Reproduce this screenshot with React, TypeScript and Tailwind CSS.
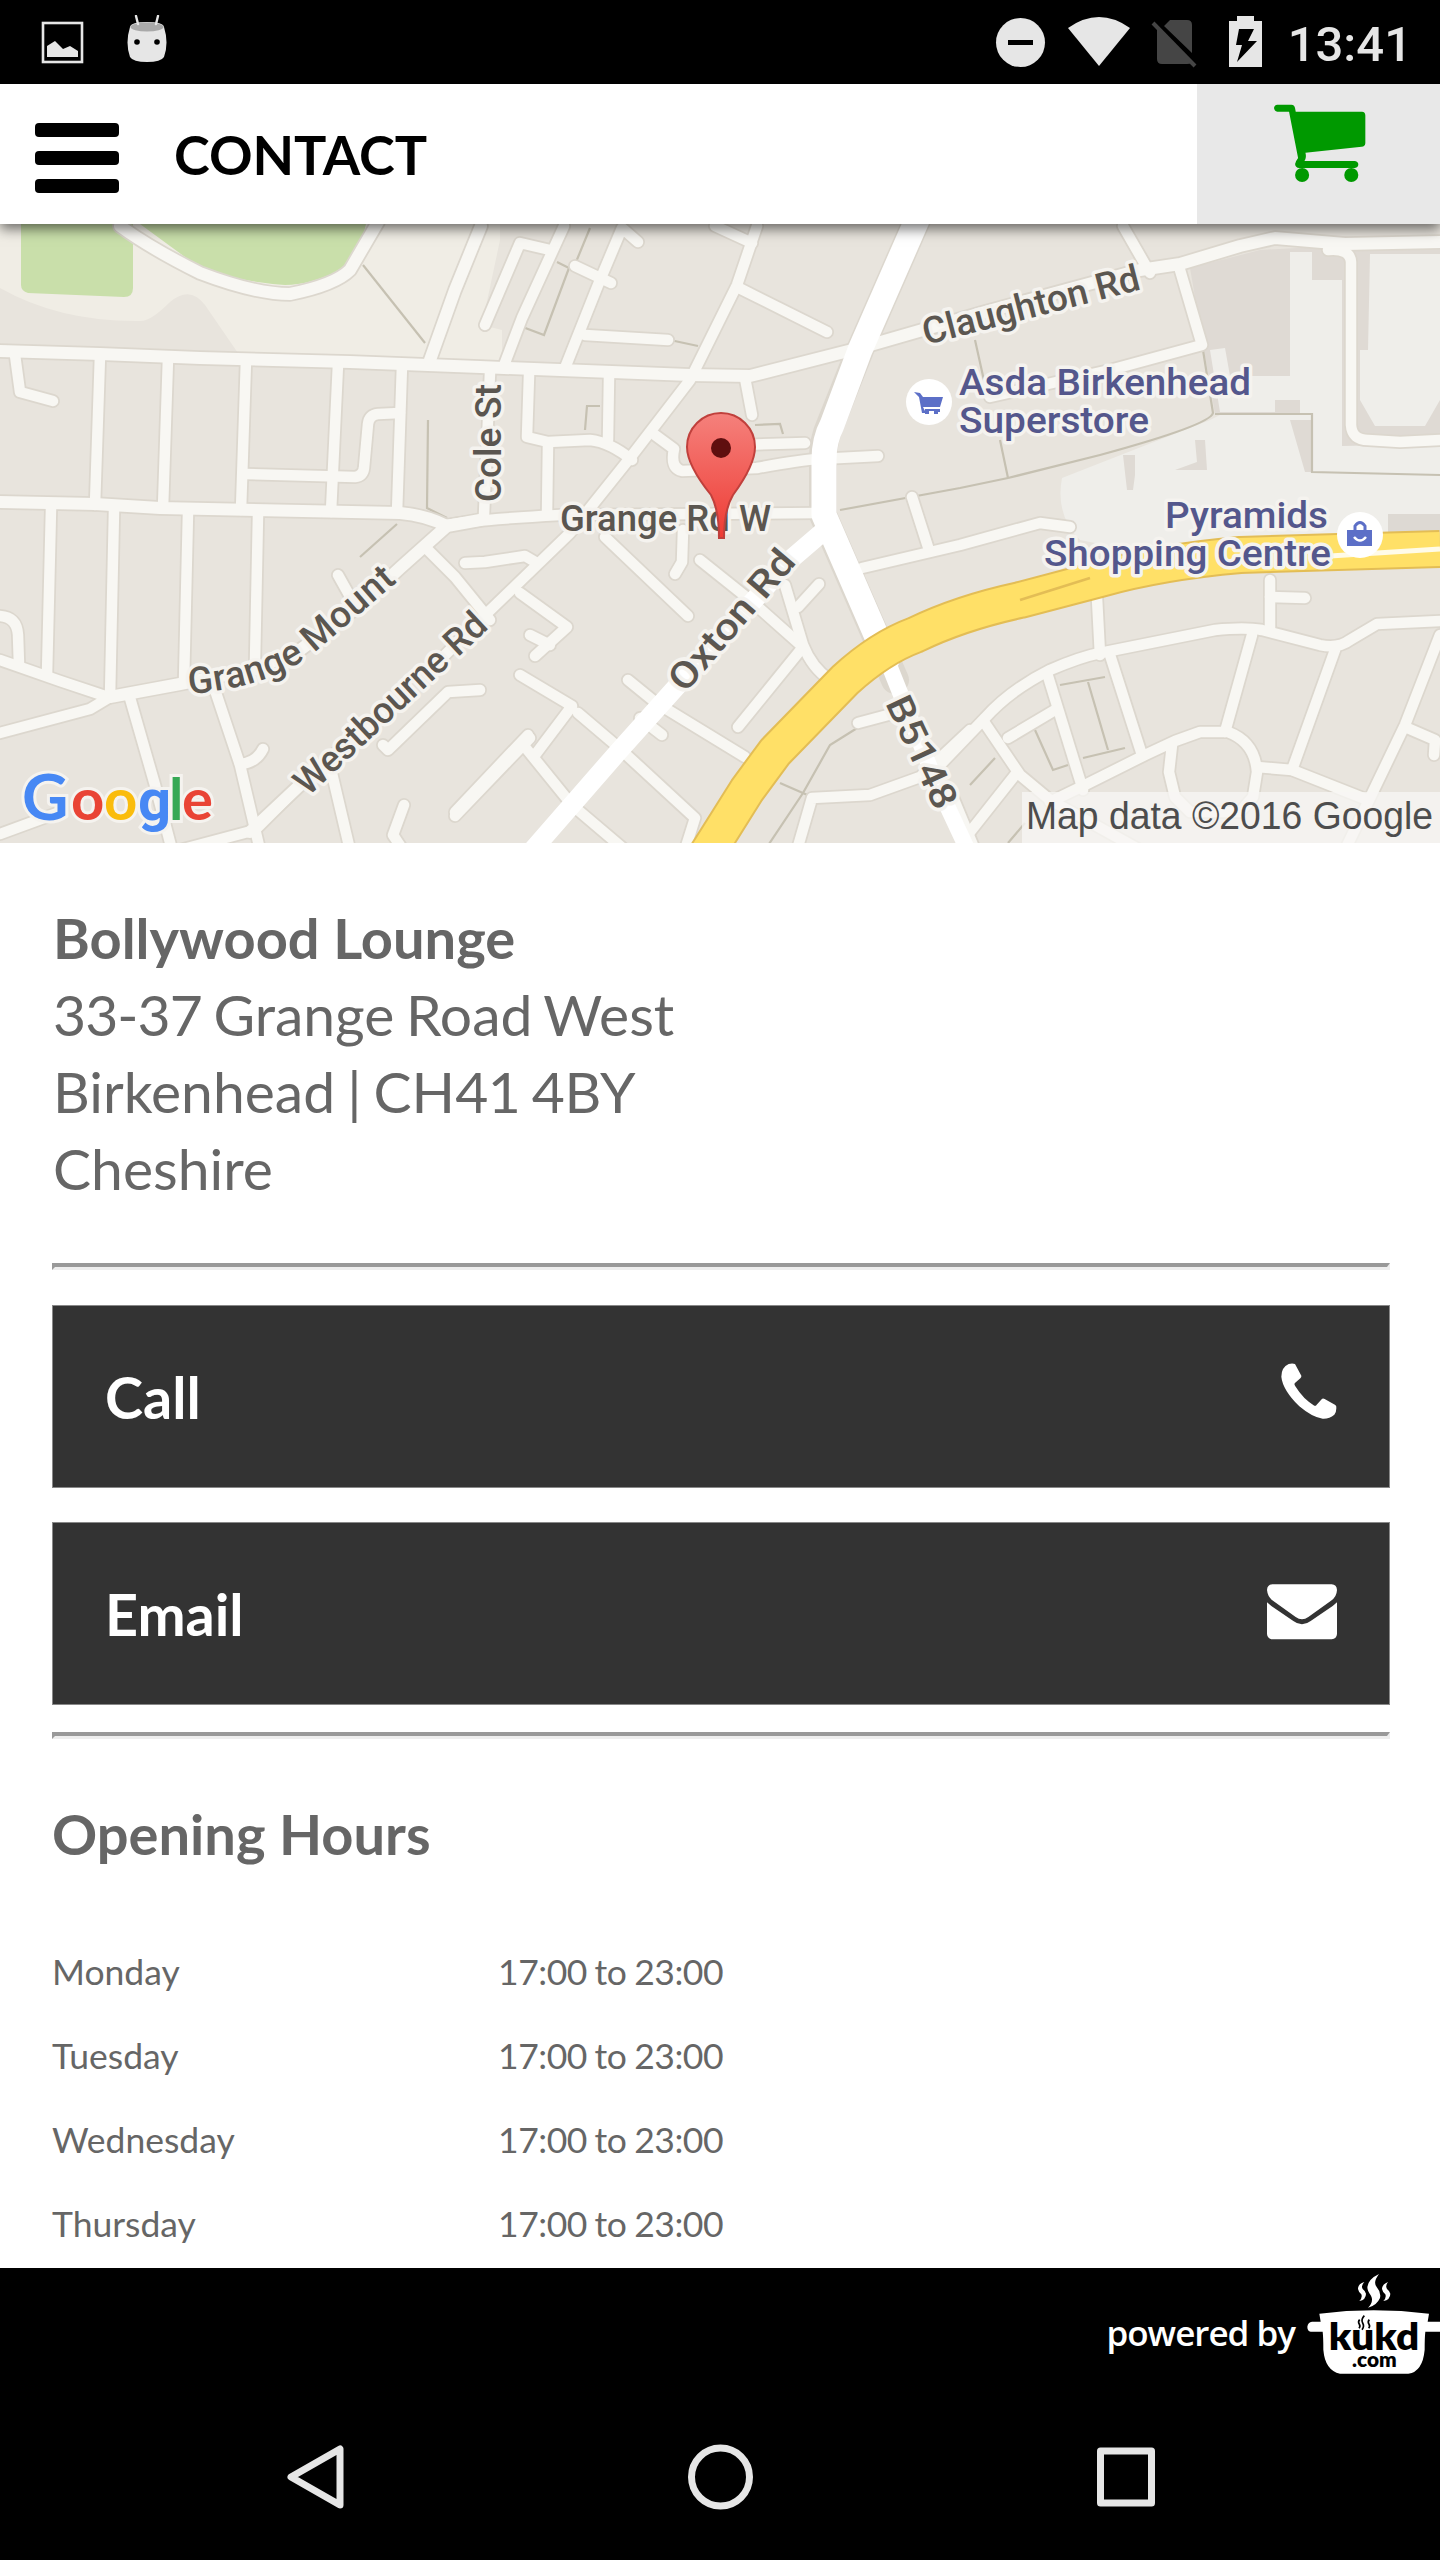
import type { ReactNode } from "react";

const COLORS = {
  land: "#e8e4dd",
  park: "#f0ede5",
  grass: "#c9dfaa",
  road: "#f8f7f3",
  casing: "#dcd7ce",
  mainRoad: "#ffffff",
  aRoad: "#ffe067",
  aRoadEdge: "#e3bd55",
  path: "#c6c1b2",
  label: "#5b5650",
  poi: "#54578c",
  status: "#e6e6e6",
  cart: "#009900",
};

const hours = [
  { day: "Monday", time: "17:00 to 23:00" },
  { day: "Tuesday", time: "17:00 to 23:00" },
  { day: "Wednesday", time: "17:00 to 23:00" },
  { day: "Thursday", time: "17:00 to 23:00" },
];

// small residential streets
const streets = [
  "M15 355L20 392L53 401",
  "M100 355L95 505",
  "M168 358L163 508",
  "M246 360L241 510",
  "M338 364L331 512",
  "M402 365L397 513",
  "M246 474L355 477Q363 476 364 468L368 424Q369 415 378 414L400 413",
  "M51 508L47 675",
  "M114 510L110 697",
  "M188 512L184 682",
  "M258 514L255 662",
  "M425 547L455 577L490 620",
  "M465 563L485 562L525 556L537 563",
  "M338 575L352 600",
  "M0 616Q17 617 18 635L19 665",
  "M0 660L60 681L105 696",
  "M0 733L90 709L110 697",
  "M130 698L155 785L172 850",
  "M215 690L240 765L260 850",
  "M240 764Q256 763 263 749",
  "M0 834L60 812",
  "M180 850L255 830L300 785",
  "M330 765L350 850",
  "M383 745L388 750L448 692L480 690",
  "M403 850L393 835L404 805",
  "M455 816L530 738",
  "M485 325L520 243L550 250",
  "M503 368L522 318L564 226",
  "M565 368L598 285L622 228L638 242",
  "M575 266L611 283",
  "M585 335L668 340",
  "M757 226L737 285L690 380L630 458L570 533L480 620L440 660",
  "M715 226L752 243",
  "M737 287L827 332",
  "M529 375L527 437L548 442L590 440Q610 442 632 460",
  "M548 443L547 515",
  "M609 376L608 440",
  "M745 378L752 415",
  "M655 435L674 449Q670 468 682 471L757 468Q800 460 820 459L878 456",
  "M740 445L805 443",
  "M490 372L484 515",
  "M447 525Q470 520 560 515L818 513",
  "M912 497L928 547",
  "M605 537L688 616",
  "M683 530L682 562L675 574",
  "M700 560L750 600L803 647L738 727",
  "M785 585L803 645Q812 668 830 680",
  "M798 607L819 584",
  "M520 593L567 627L535 656",
  "M530 635L550 645",
  "M520 675L572 706L535 755",
  "M578 713L618 747L695 818L685 850",
  "M455 812L528 735",
  "M525 747L572 805L625 850",
  "M628 680L655 702L745 757",
  "M640 718L662 735",
  "M862 568L960 545L1040 523L1070 527",
  "M858 723L888 715",
  "M797 850L812 798L870 795L920 777L970 730",
  "M940 765L985 718Q1010 690 1050 670Q1080 657 1100 653L1215 630Q1245 627 1262 630L1320 645Q1338 649 1350 640L1377 624L1440 621",
  "M1097 598L1100 655",
  "M1270 580L1270 628",
  "M1270 597L1305 598",
  "M1110 655L1142 755",
  "M1252 635L1225 732",
  "M1335 650L1292 770",
  "M1440 635L1405 725L1345 850",
  "M1405 727L1435 740L1434 755",
  "M1047 673L1083 790",
  "M1050 802L1085 785L1145 755L1175 741L1200 732L1228 732Q1255 742 1257 772L1253 797L1240 812L1190 812L1175 797L1169 772L1172 745",
  "M1257 767L1292 770L1368 800",
  "M984 722L1020 775L1050 800L1140 850",
  "M1055 710L1008 738",
  "M1015 775L970 832",
  "M950 790L975 850",
  "M1123 226L1150 273",
  "M1180 270L1202 345L1110 370L990 397",
  "M1328 250Q1350 248 1351 262L1351 425Q1352 440 1368 440L1400 442L1440 440",
];

const connectors = [
  "M0 351L100 354L200 358L350 362L480 367L690 375L750 376L860 348L985 312L1140 270L1180 264L1240 246L1275 238L1345 244L1440 242",
  "M0 502L95 504L160 508L400 513Q425 515 447 526",
  "M480 520L447 526L400 568L360 605L300 650L255 669L180 684L110 697",
  "M120 226Q150 248 200 273Q255 294 290 294Q335 285 350 270L378 222",
  "M481 226L455 290L430 360",
  "M250 832L300 785L380 715",
];

// service roads and footpaths
const paths = [
  "M363 265L425 343",
  "M428 420L427 508L447 518",
  "M397 524L360 557",
  "M585 430L587 406L600 406",
  "M557 262L569 268L544 335L520 326",
  "M670 340L698 346",
  "M590 228L576 262",
  "M755 425L780 424L783 434",
  "M840 510L960 488L1008 478L1100 455Q1210 425 1213 413L1203 350",
  "M975 340L985 385M1000 440L1008 478",
  "M1215 414L1312 414L1312 472L1440 475",
  "M765 850L803 793L830 745L862 725",
  "M780 783L812 797",
  "M1060 685L1105 677M1088 682L1108 750M1083 758L1125 748",
  "M1035 730L1053 770L1068 765M995 758L970 785M1008 843L1025 823",
  "M1020 600L1080 580L1105 573",
];

function StatusBar() {
  return (
    <div className="flex h-[84px] items-center justify-between bg-black">
      <div className="flex items-center pl-[41px]">
        <svg className="h-[43px] w-[43px]" viewBox="0 0 43 43" fill={COLORS.status}>
          <rect x="2" y="2" width="39" height="39" fill="none" stroke={COLORS.status} strokeWidth="2.6" />
          <path d="M6 25L14 20L22 28L29 25L37 30V36H6Z" />
        </svg>
        <svg className="mb-[6px] ml-[43px] h-[48px] w-[40px]" viewBox="0 0 40 48">
          <path d="M3 12Q4 7 20 7Q36 7 37 12Q42 28 37 42Q34 47 20 47Q6 47 3 42Q-2 28 3 12Z" fill={COLORS.status} />
          <ellipse cx="20" cy="12" rx="16.5" ry="4.5" fill="#a9a9a9" />
          <path d="M9 1L11 9M31 1L29 9" stroke={COLORS.status} strokeWidth="2.4" strokeLinecap="round" />
          <circle cx="10" cy="27" r="2.8" />
          <circle cx="30" cy="27" r="2.8" />
        </svg>
      </div>
      <div className="flex items-center pr-[28px]">
        <svg className="h-[52px] w-[272px]" viewBox="990 16 272 52" fill={COLORS.status}>
          <circle cx="1020.500" cy="42.500" r="24.500" />
          <rect x="1008" y="40" width="25" height="5" fill="#000" />
          <path d="M1068 28Q1099 6 1130 28L1099 66Z" />
          <path d="M1170 20H1187Q1192 20 1192 25V53L1164 26ZM1157 29L1191 63Q1190 64 1187 64H1162Q1157 64 1157 59Z" fill="#454545" />
          <path d="M1153 23L1195 66" stroke="#454545" strokeWidth="4" />
          <path d="M1229 21H1237V16H1254V21H1262V67H1229Z" />
          <path d="M1239 29H1254L1248 41H1257L1237 62L1242 45H1236Z" fill="#000" />
        </svg>
        <span className="ml-[26px] mt-[4px] font-[Roboto] text-[49px] font-medium leading-none text-[#e6e6e6]">13:41</span>
      </div>
    </div>
  );
}

function Header() {
  return (
    <header className="relative z-10 flex h-[140px] items-stretch justify-between bg-white shadow-[0_5px_12px_rgba(0,0,0,0.55)]">
      <div className="flex items-center pl-[35px]">
        <div className="mt-[8px] flex w-[84px] flex-col gap-[14px]">
          <div className="h-[14px] rounded-[4px] bg-black" />
          <div className="h-[14px] rounded-[4px] bg-black" />
          <div className="h-[14px] rounded-[4px] bg-black" />
        </div>
        <h1 className="ml-[55px] mt-[2px] text-[54px] font-bold leading-none text-black">CONTACT</h1>
      </div>
      <div className="flex w-[243px] justify-center bg-[#e8e8e8] pt-[20px]">
        <svg className="ml-[3px] h-[79px] w-[92px]" viewBox="942 314 275 234" fill={COLORS.cart}>
          <path d="M952 315H994Q1004 316 1005 326L1007 336H1205Q1215 337 1215 347V430Q1214 440 1204 441L1036 459Q1040 474 1033 483H1184Q1194 485 1194 493Q1194 503 1184 504H1017Q1006 503 1005 492Q1007 483 1014 474L987 336H952Q943 334 942 325Q943 316 952 315Z" />
          <circle cx="1026" cy="525" r="21" />
          <circle cx="1173" cy="525" r="21" />
        </svg>
      </div>
    </header>
  );
}

function Label({ children, size = 37, fill = COLORS.label, ...rest }: any) {
  return (
    <text
      fontFamily="Roboto, sans-serif"
      fontSize={size}
      fontWeight="500"
      fill={fill}
      stroke="#f5f3ef"
      strokeWidth="7"
      strokeLinejoin="round"
      paintOrder="stroke"
      lengthAdjust="spacingAndGlyphs"
      {...rest}
    >
      {children}
    </text>
  );
}

function Map() {
  return (
    <svg className="block h-[619px] w-full" viewBox="0 224 1440 619">
      <rect x="0" y="224" width="1440" height="619" fill={COLORS.land} />
      {/* park */}
      <path d="M0 224H500L500 240L482 325L502 330V366L240 356L205 305Q190 285 170 302Q150 322 140 321Q60 322 0 288Z" fill={COLORS.park} />
      <path d="M21 224H133V288Q133 297 124 297L28 293Q21 291 21 285Z" fill={COLORS.grass} />
      <path d="M140 224H366Q358 262 340 270Q310 285 285 285Q240 282 200 268Z" fill={COLORS.grass} />

      {/* shopping area */}
      <path d="M1190 268L1260 250L1440 240V470H1312V414H1215Z" fill="#dfdad4" />
      <path d="M1290 252H1312V280H1342V446L1440 444V560H1180L1080 540Q1055 515 1062 478L1210 420L1222 414H1300V400H1275V376H1290ZM1370 254H1440V400L1425 426H1375L1360 400V350H1368Z" fill="#efeeea" />
      <path d="M1290 420H1312V472H1305ZM1123 455H1135V475L1133 490H1127ZM1195 440H1205L1207 470H1175L1197 462Z" fill="#dfdad4" />
      <path d="M1210 350L1225 348L1230 376H1275V412H1220Z" fill="#efeeea" />
      <path d="M1388 514H1440V532L1388 540Z" fill="#ddd9d3" />

      {paths.map((d, i) => (
        <path key={i} d={d} fill="none" stroke={COLORS.path} strokeWidth="2.2" />
      ))}

      <g fill="none" strokeLinecap="round" strokeLinejoin="round">
        {streets.map((d, i) => (
          <path key={i} d={d} stroke={COLORS.casing} strokeWidth="14" />
        ))}
        {connectors.map((d, i) => (
          <path key={i} d={d} stroke={COLORS.casing} strokeWidth="15.500" />
        ))}
        <path d="M917 220L860 350L830 425Q823 440 823 460V515L895 680" stroke={COLORS.casing} strokeWidth="28" />
        {streets.map((d, i) => (
          <path key={i} d={d} stroke={COLORS.road} strokeWidth="10.500" />
        ))}
        {connectors.map((d, i) => (
          <path key={i} d={d} stroke={COLORS.road} strokeWidth="12" />
        ))}
        <path d="M825 530L790 560L618 752L530 853" stroke={COLORS.mainRoad} strokeWidth="19" />
        <path d="M917 220L860 350L832 425Q824 440 824 460V515L887 660" stroke={COLORS.mainRoad} strokeWidth="25" />
        <path d="M887 660L935 780L970 855" stroke={COLORS.mainRoad} strokeWidth="16" />
      </g>

      {/* A road */}
      <g fill="none" strokeLinejoin="round">
        <path d="M703 860L747 790L775 752L845 680Q880 648 915 635Q960 613 1020 600L1100 579Q1160 562 1240 555L1440 549" stroke={COLORS.aRoadEdge} strokeWidth="38" />
        <path d="M703 860L747 790L775 752L845 680Q880 648 915 635Q960 613 1020 600L1100 579Q1160 562 1240 555L1440 549" stroke={COLORS.aRoad} strokeWidth="34" />
        <path d="M1330 556L1440 549" stroke="#fffbe8" strokeWidth="5" />
        <path d="M1020 600L1090 578" stroke={COLORS.aRoadEdge} strokeWidth="2.500" />
      </g>

      <defs>
        <path id="grange-mount" d="M189 694Q275 687 320 648L412 569" />
        <linearGradient id="pin" x1="0" y1="0" x2="0" y2="1">
          <stop offset="0" stopColor="#f5817c" />
          <stop offset="1" stopColor="#ee3b34" />
        </linearGradient>
      </defs>

      <Label x="560" y="531" textLength="211">Grange Rd W</Label>
      <Label transform="translate(501 502) rotate(-90)" textLength="118">Cole St</Label>
      <Label transform="translate(926 345) rotate(-14.500)" textLength="223">Claughton Rd</Label>
      <Label><textPath href="#grange-mount" textLength="243">Grange Mount</textPath></Label>
      <Label transform="translate(308 797) rotate(-43)" textLength="248">Westbourne Rd</Label>
      <Label transform="translate(685 694) rotate(-49.500)" textLength="173">Oxton Rd</Label>
      <Label transform="translate(885 703) rotate(65)" textLength="120">B5148</Label>
      <Label x="959" y="395" fill={COLORS.poi} textLength="292">Asda Birkenhead</Label>
      <Label x="959" y="433" fill={COLORS.poi} textLength="190">Superstore</Label>
      <Label x="1165" y="528" fill={COLORS.poi} textLength="163">Pyramids</Label>
      <Label x="1044" y="566" fill={COLORS.poi} textLength="287">Shopping Centre</Label>

      <circle cx="929" cy="402" r="23" fill="#fff" />
      <path d="M914 392L920 393L923 397H943L940 407H923L926 413H922L919 397ZM925 409H940V412H938V414H934V411H929V414H925Z" fill="#5c6fc7" />
      <circle cx="1360" cy="535" r="23" fill="#fff" />
      <path d="M1355 530V526Q1360 519 1365 526V530" fill="none" stroke="#5c6fc7" strokeWidth="3" />
      <path d="M1347 530H1372V546H1347Z" fill="#5c6fc7" />
      <path d="M1354 537Q1360 544 1366 537" fill="none" stroke="#fff" strokeWidth="2.500" />

      {/* marker */}
      <path
        d="M719 538Q719 510 711 495Q687 465 687 447A34 34 0 0 1 755 447Q755 465 733 495Q724 510 724 538Z"
        fill="url(#pin)"
        stroke="#c0403c"
        strokeWidth="2"
      />
      <circle cx="721" cy="448" r="10" fill="#5f0f0f" />

      <text
        y="820"
        fontFamily="Lato, sans-serif"
        fontSize="58"
        fontWeight="700"
        stroke="#f5f3ef"
        strokeWidth="6"
        paintOrder="stroke"
      >
        <tspan x="22" fontSize="64" fill="#4788f4">G</tspan>
        <tspan x="71" fill="#e94435">o</tspan>
        <tspan x="104" fill="#fabc0c">o</tspan>
        <tspan x="138" fontFamily="Roboto, sans-serif" fill="#4788f4">g</tspan>
        <tspan x="169" fill="#36a854">l</tspan>
        <tspan x="182" fill="#e94435">e</tspan>
      </text>

      <rect x="1022" y="792" width="418" height="51" fill="#f7f6f4" opacity="0.78" />
      <text x="1026" y="829" fontFamily="Liberation Sans, sans-serif" fontSize="38" fill="#4d4d4d" textLength="407" lengthAdjust="spacingAndGlyphs">
        Map data ©2016 Google
      </text>
    </svg>
  );
}

function Divider() {
  return <hr className="h-0 border-x-[3px] border-b-[3px] border-t-[4px] border-b-[#eeeeee] border-l-[#999999] border-r-[#eeeeee] border-t-[#999999]" />;
}

function ActionButton({ label, children }: { label: string; children: ReactNode }) {
  return (
    <button className="flex h-[183px] w-full items-center justify-between border border-[#888888] bg-[#333333] pl-[52px] pr-[52px] text-white">
      <span className="text-[57.5px] font-bold leading-none">{label}</span>
      {children}
    </button>
  );
}

function KukdLogo() {
  return (
    <svg className="h-[102px] w-[133px]" viewBox="741 70 399 306" fill="#fff">
      <path d="M778 192Q940 172 1107 192L1103 216H1140V246H1096Q1094 262 1094 300Q1088 366 1045 372H840Q795 362 790 300Q790 262 788 246H752Q742 244 742 231Q744 217 756 216H782Z" />
      <path d="M957 73Q925 88 922 112Q922 124 933 138Q942 156 924 174Q950 168 960 145Q964 128 950 112Q938 98 957 73ZM913 97Q894 102 894 118Q896 128 904 134Q908 144 898 154Q918 150 918 132Q916 124 908 118Q902 108 913 97ZM984 97Q966 104 966 118Q968 128 976 134Q980 144 970 154Q991 150 991 132Q989 124 981 118Q975 108 984 97Z" />
      <text x="806" y="300" fill="#000" fontFamily="Lato, sans-serif" fontSize="112" fontWeight="800" textLength="272" lengthAdjust="spacingAndGlyphs">kukd</text>
      <path d="M913 198Q902 210 908 220Q914 230 906 240M899 210Q893 216 898 224Q902 230 897 236M928 210Q922 216 927 224Q931 230 926 236" fill="none" stroke="#000" strokeWidth="5" />
      <text x="876" y="352" fill="#000" fontFamily="Lato, sans-serif" fontSize="60" fontWeight="800" textLength="134" lengthAdjust="spacingAndGlyphs">.com</text>
    </svg>
  );
}

export default function App() {
  return (
    <div className="flex h-[2560px] w-[1440px] flex-col overflow-hidden bg-white font-[Lato,sans-serif]">
      <StatusBar />
      <Header />
      <Map />

      <main className="flex-1 overflow-hidden pl-[52px] pr-[50px] text-[#666666]">
        <div className="pt-[56px] text-[57px] leading-[77px] [word-spacing:-3px]">
          <p className="pl-[1px] text-[56px] font-bold [word-spacing:0px]">Bollywood Lounge</p>
          <p className="pl-[1px]">
            <span className="tracking-[-0.9px]">33-37</span> Grange Road West
          </p>
          <p className="pl-[1px] [word-spacing:-2.5px]">
            Birkenhead | CH<span className="tracking-[-0.5px]">41 4</span>BY
          </p>
          <p className="pl-[1px]">Cheshire</p>
        </div>

        <div className="mt-[56px]">
          <Divider />
        </div>
        <div className="mb-[27px] mt-[35px] flex flex-col gap-[34px]">
          <ActionButton label="Call">
            <svg className="mb-[11px] h-[56px] w-[56px]" viewBox="245 367 168 168" fill="currentColor">
              <path d="M268 370Q279 367 287 370L306 405Q307 409 303 413L286 428Q284 432 288 437Q312 476 345 495Q349 497 352 492L367 476Q370 472 376 475L408 493Q412 496 411 503Q411 515 405 522Q390 535 370 534Q340 531 300 497Q250 448 246 408Q246 380 268 370Z" />
            </svg>
          </ActionButton>
          <ActionButton label="Email">
            <svg className="mb-[4px] h-[56px] w-[70px]" viewBox="201 1034 210 168" fill="currentColor">
              <path d="M217 1035H395Q410 1036 411 1052Q410 1073 393 1084L325 1133Q306 1147 287 1133L219 1084Q203 1073 201 1052Q202 1036 217 1035Z" />
              <path d="M201 1089L214 1100L280 1145Q306 1165 332 1145L398 1100L411 1089V1184Q410 1198 395 1200H217Q202 1198 201 1184Z" />
            </svg>
          </ActionButton>
        </div>
        <Divider />

        <h2 className="mt-[56px] text-[56px] font-bold leading-[77px]">Opening Hours</h2>
        <div className="mt-[58px] text-[35.5px] leading-[84px]">
          {hours.map((row) => (
            <div key={row.day} className="grid grid-cols-[446px_1fr]">
              <span>{row.day}</span>
              <span className="tracking-[-0.45px] [word-spacing:-1px]">{row.time}</span>
            </div>
          ))}
        </div>
      </main>

      <footer className="flex h-[292px] shrink-0 flex-col bg-black">
        <div className="flex items-start justify-end pt-[5px]">
          <span className="mr-[12px] mt-[35px] font-['Open_Sans'] text-[35px] font-semibold leading-[50px] tracking-[-1px] text-white">powered by</span>
          <KukdLogo />
        </div>
        <div className="mt-[69px] flex items-center justify-between pl-[287px] pr-[285px]">
          <svg className="h-[66px] w-[57px]" viewBox="0 0 57 66" fill="none" stroke={COLORS.status} strokeWidth="7" strokeLinejoin="round">
            <path d="M53 5V61L4 33Z" />
          </svg>
          <svg className="h-[66px] w-[65px]" viewBox="0 0 65 66" fill="none" stroke={COLORS.status} strokeWidth="7">
            <circle cx="32.500" cy="33" r="29" />
          </svg>
          <svg className="h-[66px] w-[58px]" viewBox="0 0 58 66" fill="none" stroke={COLORS.status} strokeWidth="7" strokeLinejoin="round">
            <rect x="3.500" y="7" width="51" height="52" />
          </svg>
        </div>
      </footer>
    </div>
  );
}
